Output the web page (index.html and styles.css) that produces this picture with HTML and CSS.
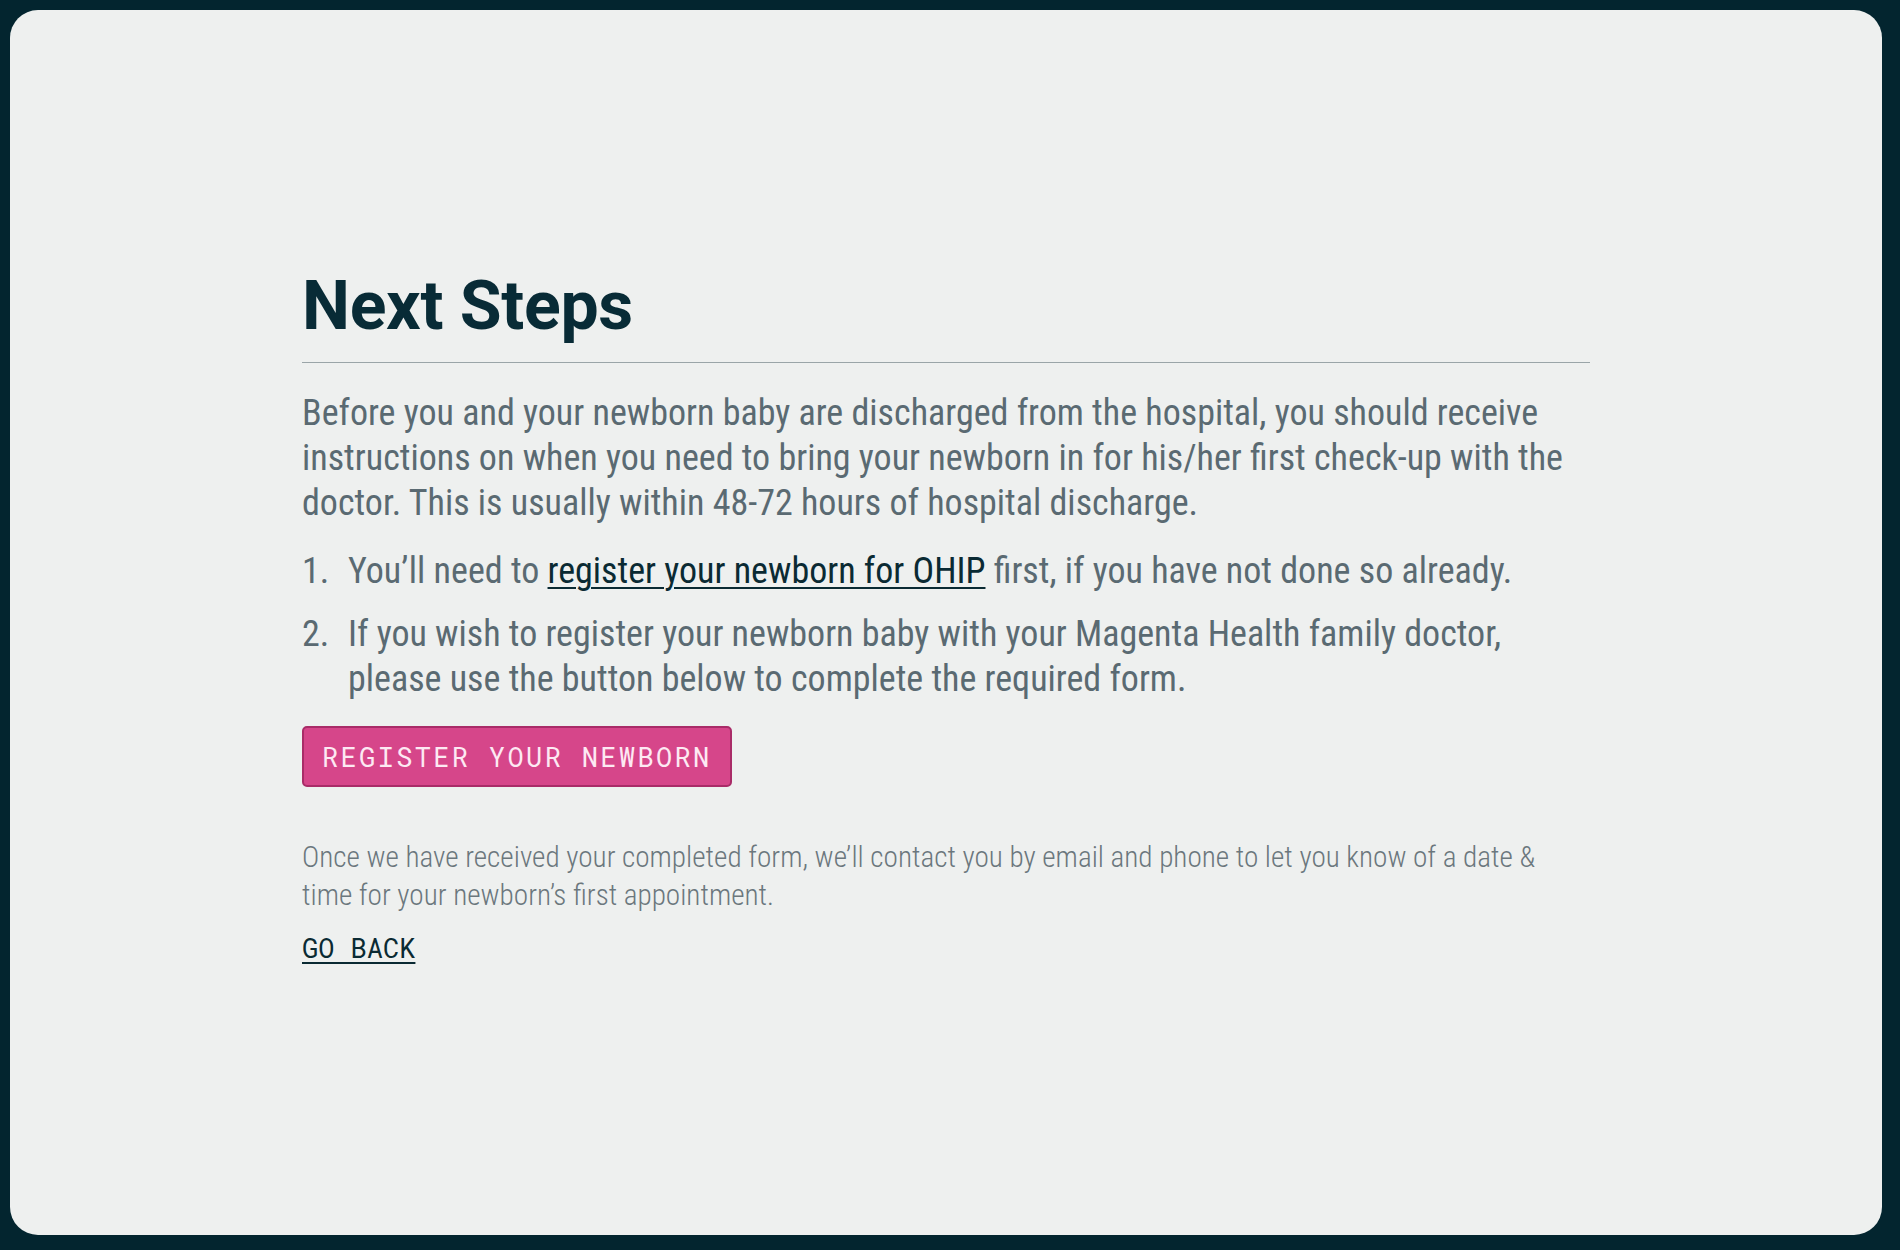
FILE: index.html
```html
<!DOCTYPE html>
<html lang="en">
<head>
<meta charset="utf-8">
<title>Next Steps</title>
<link rel="stylesheet" href="styles.css">
</head>
<body>
<main class="card">
  <section class="content">
    <h1 class="title">Next Steps</h1>
    <p class="lead">Before you and your newborn baby are discharged from the hospital, you should receive instructions on when you need to bring your newborn in for his/her first check-up with the doctor. This is usually within 48-72 hours of hospital discharge.</p>
    <ol class="steps">
      <li class="step"><span class="step-text">You’ll need to <a class="link" href="#">register your newborn for OHIP</a> first, if you have not done so already.</span></li>
      <li class="step"><span class="step-text">If you wish to register your newborn baby with your Magenta Health family doctor, please use the button below to complete the required form.</span></li>
    </ol>
    <button class="btn" type="button">REGISTER YOUR NEWBORN</button>
    <p class="note">Once we have received your completed form, we’ll contact you by email and phone to let you know of a date &amp; time for your newborn’s first appointment.</p>
    <a class="back" href="#">GO BACK</a>
  </section>
</main>
</body>
</html>
```

FILE: styles.css
```css
html, body {
  margin: 0;
  padding: 0;
}
body {
  background: #03252f;
  height: 1250px;
  box-sizing: border-box;
  padding: 10px 18px 15px 10px;
  display: flex;
}
.card {
  flex: 1;
  background: #eef0ef;
  border-radius: 28px;
  display: flex;
  flex-direction: column;
  justify-content: center;
}
.content {
  width: 1288px;
  margin: 0 auto;
  padding-bottom: 14px;
  font-family: "Roboto Condensed", "Liberation Sans Narrow", "Roboto", sans-serif;
  color: #5a6a72;
}
.title {
  margin: 0;
  font-family: "Roboto", sans-serif;
  font-weight: 700;
  font-size: 68px;
  line-height: 82px;
  color: #082b36;
  padding-bottom: 15px;
  border-bottom: 1px solid #9aa5a8;
  letter-spacing: -0.3px;
}
.lead {
  margin: 28px 0 0;
  font-size: 36px;
  line-height: 45px;
}
.steps {
  list-style: none;
  margin: 23px 0 0;
  padding: 0;
  counter-reset: step;
}
.step {
  counter-increment: step;
  display: grid;
  grid-template-columns: 46px 1fr;
  font-size: 36px;
  line-height: 45px;
}
.step + .step {
  margin-top: 18px;
}
.step::before {
  content: counter(step) ".";
}
.link {
  color: #0a2a33;
  text-decoration: underline;
  text-decoration-thickness: 2px;
  text-underline-offset: 4px;
}
.btn {
  margin-top: 24px;
  display: inline-block;
  height: 61px;
  padding: 0 18px 0 18px;
  background: #d6468a;
  border: 2px solid #a92c68;
  border-radius: 5px;
  color: #fde9f3;
  font-family: "Roboto Mono", "DejaVu Sans Mono", "Liberation Mono", monospace;
  font-size: 27px;
  letter-spacing: 2.35px;
  line-height: 57px;
}
.note {
  margin: 51px 0 0;
  font-size: 29.2px;
  line-height: 38px;
  font-weight: 300;
  color: #6b777d;
}
.back {
  display: inline-block;
  margin-top: 16px;
  font-family: "Roboto Mono", "DejaVu Sans Mono", "Liberation Mono", monospace;
  font-size: 27px;
  line-height: 36px;
  color: #0a2a33;
  text-decoration: underline;
  text-decoration-thickness: 2px;
  text-underline-offset: 4px;
}
```
